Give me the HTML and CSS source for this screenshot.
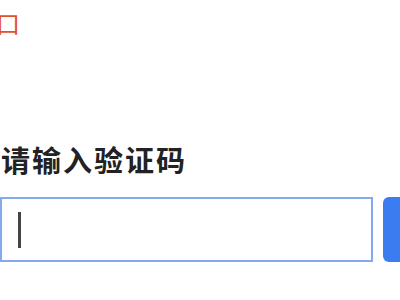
FILE: index.html
```html
<!DOCTYPE html>
<html lang="zh-CN">
<head>
<meta charset="utf-8">
<link rel="stylesheet" href="styles.css">
</head>
<body>
<div class="page">
  <div class="brand">口</div>
  <div class="label">请输入验证码</div>
  <div class="row">
    <div class="field"><span class="caret"></span></div>
    <div class="btn"></div>
  </div>
</div>
</body>
</html>
```

FILE: styles.css
```css
html, body {
  margin: 0;
  padding: 0;
  background: #ffffff;
}
.page {
  width: 400px;
  height: 300px;
  overflow: hidden;
  font-family: "Noto Sans CJK SC", "Noto Sans", sans-serif;
}
.brand {
  margin-left: -4px;
  margin-top: 8px;
  height: 30px;
  font-size: 24px;
  line-height: 30px;
  color: #e4502e;
}
.label {
  margin-top: 104px;
  margin-left: 1px;
  font-size: 29px;
  line-height: 34px;
  font-weight: bold;
  letter-spacing: 2px;
  color: #222222;
}
.row {
  margin-top: 21px;
  display: flex;
  gap: 10px;
  height: 65px;
}
.field {
  flex: none;
  width: 353px;
  height: 61px;
  border: 2px solid #86a8ee;
  background: #ffffff;
  display: flex;
  align-items: center;
  padding-left: 16px;
}
.caret {
  width: 3px;
  height: 36px;
  background: #444444;
}
.btn {
  flex: 1;
  background: #3b7cf0;
  border-radius: 6px;
  margin-right: -10px;
}
```
